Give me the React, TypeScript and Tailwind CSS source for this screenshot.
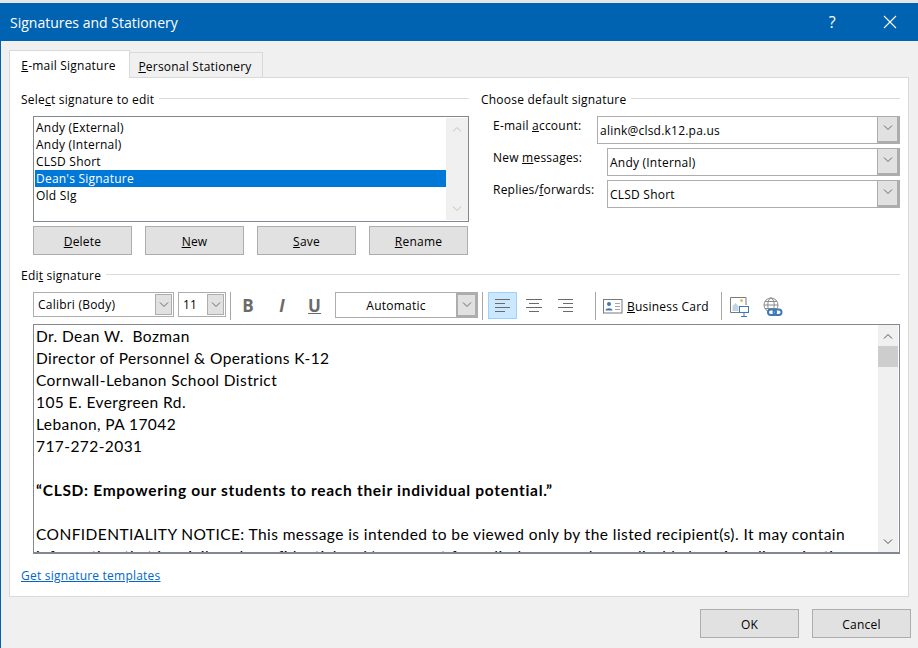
import React from "react";

const ui = "font-['Open_Sans',sans-serif] text-[12px] tracking-[0.22px] text-black";

function Chevron({ up = false, color = "#6b6b6b" }: { up?: boolean; color?: string }) {
  return (
    <svg width="10" height="6" viewBox="0 0 10 6" fill="none">
      <path d={up ? "M1 5.5 5 1.5 9 5.5" : "M1 .5 5 4.5 9 .5"} stroke={color} strokeWidth="1" />
    </svg>
  );
}

function GroupTitle({ children, className = "" }: { children: React.ReactNode; className?: string }) {
  return (
    <div className={`flex items-center h-[18px] ${className}`}>
      <span className="leading-[18px] pt-[2px] whitespace-nowrap">{children}</span>
      <div className="flex-1 h-px bg-[#dcdcdc] ml-[5px] -mt-[2px]" />
    </div>
  );
}

function Btn({ children, className = "" }: { children: React.ReactNode; className?: string }) {
  return (
    <button className={`w-[99px] h-[29px] shrink-0 bg-[#e1e1e1] border border-[#adadad] text-center leading-[29px] ${className}`}>
      {children}
    </button>
  );
}

function Combo({ text, w }: { text: string; w: string }) {
  return (
    <div className={`flex h-[28px] border border-[#adadad] bg-white ${w}`}>
      <div className="flex-1 pl-[2px] leading-[27px]">{text}</div>
      <div className="w-[22px] bg-[#e1e1e1] border-l border-[#adadad] border-r-2 border-b-2 flex items-center justify-center pb-[2px]">
        <Chevron />
      </div>
    </div>
  );
}

function Row({ label, children }: { label: React.ReactNode; children: React.ReactNode }) {
  return (
    <div className="flex items-start justify-between h-[32px]">
      <span className="leading-[18px] pt-[1px]">{label}</span>
      {children}
    </div>
  );
}

function AlignIcon({ kind }: { kind: "left" | "center" | "right" }) {
  const lines =
    kind === "left"
      ? ["M0 .5H15", "M0 4.5H10", "M0 8.5H15", "M0 12.5H10"]
      : kind === "center"
        ? ["M0 .5H16", "M3 4.5H13", "M0 8.5H16", "M3 12.5H13"]
        : ["M0 .5H15", "M5 4.5H15", "M0 8.5H15", "M5 12.5H15"];
  return (
    <svg width="16" height="13" viewBox="0 0 16 13" fill="none">
      {lines.map((d) => (
        <path key={d} d={d} stroke="#6a6a6a" strokeWidth="1" />
      ))}
    </svg>
  );
}

function Sep({ className = "" }: { className?: string }) {
  return <div className={`w-px h-[28px] bg-[#a6a6a6] shrink-0 ${className}`} />;
}

export default function App() {
  const sigs = ["Andy (External)", "Andy (Internal)", "CLSD Short", "Dean's Signature", "Old SIg"];

  return (
    <div className={`${ui} w-[918px] h-[648px] bg-[#f0f0f0] overflow-hidden flex flex-col`}>
      <div className="h-[3px] bg-[#e6e6e6]" />
      {/* title bar */}
      <div className="h-[38px] bg-[#0063b1] flex items-center pl-[10px] shrink-0">
        <span className="text-white text-[14px] tracking-normal flex-1">Signatures and Stationery</span>
        <span className="text-white text-[16px] mr-[47px]">?</span>
        <svg width="14" height="14" viewBox="0 0 14 14" className="mr-[21px]" fill="none">
          <path d="M1 1 13 13M13 1 1 13" stroke="#fff" strokeWidth="1.1" />
        </svg>
      </div>

      <div className="flex-1 border-l border-[#0063b1] pl-[8px] flex flex-col">
        {/* tabs */}
        <div className="flex items-end h-[36px] relative z-10">
          <div className="w-[121px] h-[28px] pr-[2px] bg-white border border-b-0 border-[#d9d9d9] -mb-px text-center leading-[30px]">
            <u>E</u>-mail Signature
          </div>
          <div className="w-[133px] h-[25px] pr-[2px] bg-[#f0f0f0] border border-l-0 border-b-0 border-[#d9d9d9] text-center leading-[28px]">
            <u>P</u>ersonal Stationery
          </div>
        </div>

        {/* panel */}
        <div className="w-[900px] h-[520px] shrink-0 bg-white border border-[#d9d9d9] pl-[11px] pr-[8px] pt-[12px]">
          <div className="flex">
            <div className="w-[448px] shrink-0">
              <GroupTitle>
                Sele<u>c</u>t signature to edit
              </GroupTitle>
              <div className="ml-[12px] mt-[8px] w-[436px] h-[106px] border border-[#828790] flex p-[1px] pr-0">
                <div className="flex-1 pt-[1px]">
                  {sigs.map((s) => (
                    <div
                      key={s}
                      className={`h-[17px] leading-[17px] pl-px ${s === "Dean's Signature" ? "bg-[#0078d7] text-white" : ""}`}
                    >
                      {s}
                    </div>
                  ))}
                </div>
                <div className="w-[22px] bg-[#f0f0f0] flex flex-col justify-between items-center py-[8px]">
                  <Chevron up color="#c0c0c0" />
                  <Chevron color="#c0c0c0" />
                </div>
              </div>
              <div className="ml-[12px] mt-[4px] flex gap-[13px]">
                <Btn>
                  <u>D</u>elete
                </Btn>
                <Btn>
                  <u>N</u>ew
                </Btn>
                <Btn>
                  <u>S</u>ave
                </Btn>
                <Btn>
                  <u>R</u>ename
                </Btn>
              </div>
            </div>

            <div className="ml-[12px] w-[419px] shrink-0">
              <GroupTitle>Choose default signature</GroupTitle>
              <div className="ml-[12px] mt-[8px]">
                <Row
                  label={
                    <>
                      E-mail <u>a</u>ccount:
                    </>
                  }
                >
                  <Combo text="alink@clsd.k12.pa.us" w="w-[303px]" />
                </Row>
                <Row
                  label={
                    <>
                      New <u>m</u>essages:
                    </>
                  }
                >
                  <Combo text="Andy (Internal)" w="w-[293px]" />
                </Row>
                <Row
                  label={
                    <>
                      Replies/<u>f</u>orwards:
                    </>
                  }
                >
                  <Combo text="CLSD Short" w="w-[293px]" />
                </Row>
              </div>
            </div>
          </div>

          {/* edit signature */}
          <GroupTitle className="mt-[11px]">
            Edi<u>t</u> signature
          </GroupTitle>
          <div className="ml-[12px] mt-[8px] flex items-start h-[32px]">
            <div className="w-[141px] h-[25px] border border-[#adadad] flex items-center pl-[4px]">
              <span className="flex-1">Calibri (Body)</span>
              <div className="w-[17px] h-[21px] mr-px bg-[#e1e1e1] border border-[#adadad] flex items-center justify-center">
                <Chevron />
              </div>
            </div>
            <div className="ml-[4px] w-[48px] h-[25px] border border-[#adadad] flex items-center pl-[4px]">
              <span className="flex-1">11</span>
              <div className="w-[17px] h-[21px] mr-px bg-[#e1e1e1] border border-[#adadad] flex items-center justify-center">
                <Chevron />
              </div>
            </div>
            <Sep className="ml-[4px]" />
            <span className="ml-[11px] w-[12px] text-center font-bold text-[17px] leading-[28px] text-[#6a6a6a]">B</span>
            <span className="ml-[22px] w-[12px] text-center font-bold italic text-[17px] leading-[28px] text-[#6a6a6a]">I</span>
            <span className="ml-[20px] w-[12px] text-center font-bold underline text-[17px] leading-[28px] text-[#6a6a6a]">U</span>
            <div className="ml-[15px] w-[143px] h-[26px] border border-[#adadad] flex">
              <span className="flex-1 text-center leading-[25px]">Automatic</span>
              <div className="w-[21px] bg-[#e1e1e1] border-2 border-[#adadad] flex items-center justify-center">
                <Chevron />
              </div>
            </div>
            <Sep className="ml-[4px]" />
            <div className="ml-[5px] w-[29px] h-[27px] bg-[#cce8ff] border border-[#99d1ff] flex items-center justify-center">
              <AlignIcon kind="left" />
            </div>
            <div className="ml-[9px] h-[27px] flex items-center">
              <AlignIcon kind="center" />
            </div>
            <div className="ml-[16px] h-[27px] flex items-center">
              <AlignIcon kind="right" />
            </div>
            <Sep className="ml-[21px]" />
            <div className="ml-[7px] h-[28px] flex items-center">
              <svg width="20" height="15" viewBox="0 0 20 15" fill="none">
                <rect x=".5" y=".5" width="18.5" height="13.5" stroke="#7a7a7a" fill="#fff" />
                <circle cx="6" cy="5" r="2" fill="#3f78b5" />
                <path d="M2.5 11.5c0-3 7-3 7 0z" fill="#3f78b5" />
                <path d="M12 4.5h5M12 7.5h5M12 10.5h5" stroke="#a6a6a6" />
              </svg>
            </div>
            <span className="ml-[4px] leading-[29px] whitespace-nowrap">
              <u>B</u>usiness Card
            </span>
            <Sep className="ml-[12px]" />
            <div className="ml-[8px] h-[28px] flex items-start pt-[5px]">
              <svg width="20" height="20" viewBox="0 0 20 20" fill="none">
                <path d="M16 8V.5H.5v15h9" stroke="#7a7a7a" fill="#fff" />
                <path d="M2.5 14V9l3-3 3 3v5z" fill="#c3d3e6" />
                <circle cx="11.5" cy="3.5" r="1.5" fill="#e8b96a" />
                <rect x="9.5" y="9.5" width="9" height="6" stroke="#3f78b5" fill="#fff" />
                <path d="M14 16v3M11 19.5h6" stroke="#3f78b5" />
              </svg>
            </div>
            <div className="ml-[13px] h-[28px] flex items-start pt-[5px]">
              <svg width="20" height="20" viewBox="0 0 20 20" fill="none">
                <circle cx="8" cy="8" r="7" stroke="#8a8a8a" />
                <ellipse cx="8" cy="8" rx="3.2" ry="7" stroke="#8a8a8a" />
                <path d="M1 8h14M2 4.5h12M2 11.5h12" stroke="#8a8a8a" />
                <rect x="5" y="12.5" width="8" height="5.5" rx="2.7" stroke="#3f78b5" strokeWidth="2" fill="#fff" />
                <rect x="10.5" y="12.5" width="8" height="5.5" rx="2.7" stroke="#3f78b5" strokeWidth="2" fill="none" />
              </svg>
            </div>
          </div>

          {/* editor */}
          <div className="ml-[12px] w-[867px] h-[230px] border border-b-2 border-[#828790] flex overflow-hidden">
            <div className="flex-1 overflow-hidden font-['Lato',sans-serif] text-[15.5px] tracking-[0.42px] leading-[22px] pl-[2px] whitespace-nowrap">
              <div>Dr. Dean W.&nbsp; Bozman</div>
              <div>Director of Personnel &amp; Operations K-12</div>
              <div>Cornwall-Lebanon School District</div>
              <div>105 E. Evergreen Rd.</div>
              <div>Lebanon, PA 17042</div>
              <div>717-272-2031</div>
              <div className="h-[22px]" />
              <div className="font-bold tracking-[0.7px]">“CLSD: Empowering our students to reach their individual potential.”</div>
              <div className="h-[22px]" />
              <div>
                CONFIDENTIALITY NOTICE: This message is intended to be viewed only by the listed recipient(s). It may contain
              </div>
              <div>information that is privileged, confidential and/or exempt from disclosure under applicable law. Any dissemination</div>
            </div>
            <div className="w-[20px] mr-px shrink-0 bg-[#f0f0f0] flex flex-col">
              <div className="h-[21px] flex items-center justify-center">
                <Chevron up color="#505050" />
              </div>
              <div className="h-[21px] bg-[#cdcdcd]" />
              <div className="flex-1" />
              <div className="h-[21px] flex items-center justify-center">
                <Chevron color="#505050" />
              </div>
            </div>
          </div>

          <a className="block mt-[13px] text-[#0066cc] underline leading-[18px]">Get signature templates</a>
        </div>

        {/* footer */}
        <div className="flex justify-end gap-[13px] mt-[12px] pr-[7px]">
          <Btn>OK</Btn>
          <Btn>Cancel</Btn>
        </div>
      </div>
    </div>
  );
}
